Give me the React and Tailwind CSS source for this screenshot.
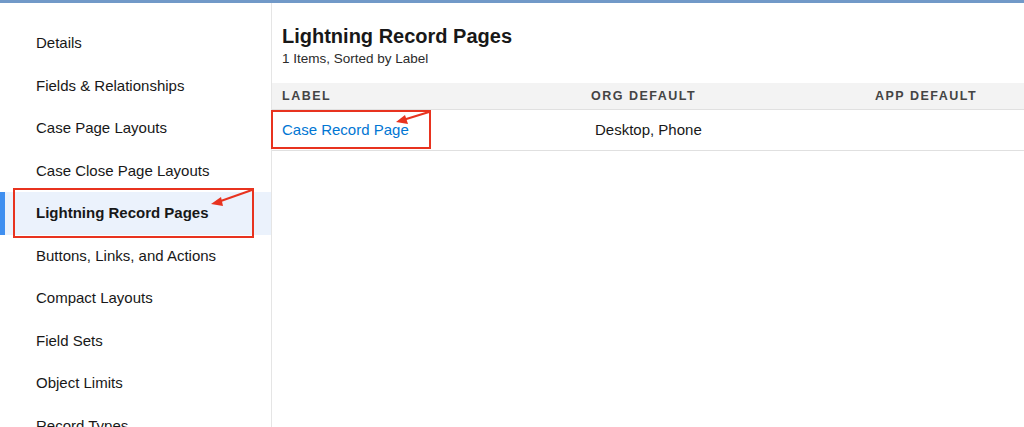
import React from "react";

const NAV = [
    "Details",
    "Fields & Relationships",
    "Case Page Layouts",
    "Case Close Page Layouts",
    "Lightning Record Pages",
    "Buttons, Links, and Actions",
    "Compact Layouts",
    "Field Sets",
    "Object Limits",
    "Record Types",
];

const ACTIVE = "Lightning Record Pages";

export default function App() {
    return (
        <div className="relative w-[1024px] h-[427px] overflow-hidden bg-white text-[#181818]" style={{ fontFamily: "'Liberation Sans', Arial, sans-serif" }}>
            <div className="h-[3px] bg-[#7199c8]" />

            <div className="flex h-[424px]">
                {/* sidebar */}
                <aside className="w-[272px] flex-shrink-0 border-r border-[#e5e5e5] pt-[19px]">
                    {NAV.map((item) => {
                        const on = item === ACTIVE;
                        return (
                            <div key={item} className={"relative h-[42.5px] flex items-center pl-9 text-[15px] " + (on ? "bg-[#ebf2fc] font-bold" : "")}>
                                {on && <span className="absolute left-0 top-0 bottom-0 w-[5px] bg-[#3f8ff0]" />}
                                {item}
                            </div>
                        );
                    })}
                </aside>

                {/* main */}
                <main className="flex-1 pt-[21px]">
                    <h1 className="px-[10px] text-[20px] font-bold leading-[24px]">Lightning Record Pages</h1>
                    <p className="px-[10px] mt-[3px] text-[13.5px] leading-[16px] text-[#2b2b2b]">1 Items, Sorted by Label</p>

                    <div className="mt-[16px] h-[27px] flex items-center bg-[#f3f3f3] border-b border-[#e0e0e0] text-[12.5px] font-bold tracking-[0.12em] text-[#444]">
                        <span className="pl-[10px] w-[319px]">LABEL</span>
                        <span className="w-[284px]">ORG DEFAULT</span>
                        <span>APP DEFAULT</span>
                    </div>
                    <div className="relative h-[41px] flex items-center border-b border-[#e0e0e0] text-[15px]">
                        <span className="pl-[10px] w-[323px] text-[#0176d3]">Case Record Page</span>
                        <span>Desktop, Phone</span>
                        <div className="absolute left-[-1px] top-[0px] w-[160px] h-[39px] border-2 border-[#e8331f]" />
                    </div>
                </main>
            </div>

            {/* annotation box on sidebar */}
            <div className="absolute left-[13px] top-[188px] w-[241px] h-[50px] border-2 border-[#e8331f]" />

            <svg className="absolute inset-0 pointer-events-none" width="1024" height="427">
                <line x1="252" y1="190" x2="218" y2="202" stroke="#e8331f" strokeWidth="2" />
                <polygon points="211,204 221,197 223,206" fill="#e8331f" />
                <line x1="429" y1="112" x2="403" y2="120" stroke="#e8331f" strokeWidth="2" />
                <polygon points="396,122 405,115 408,124" fill="#e8331f" />
            </svg>
        </div>
    );
}
